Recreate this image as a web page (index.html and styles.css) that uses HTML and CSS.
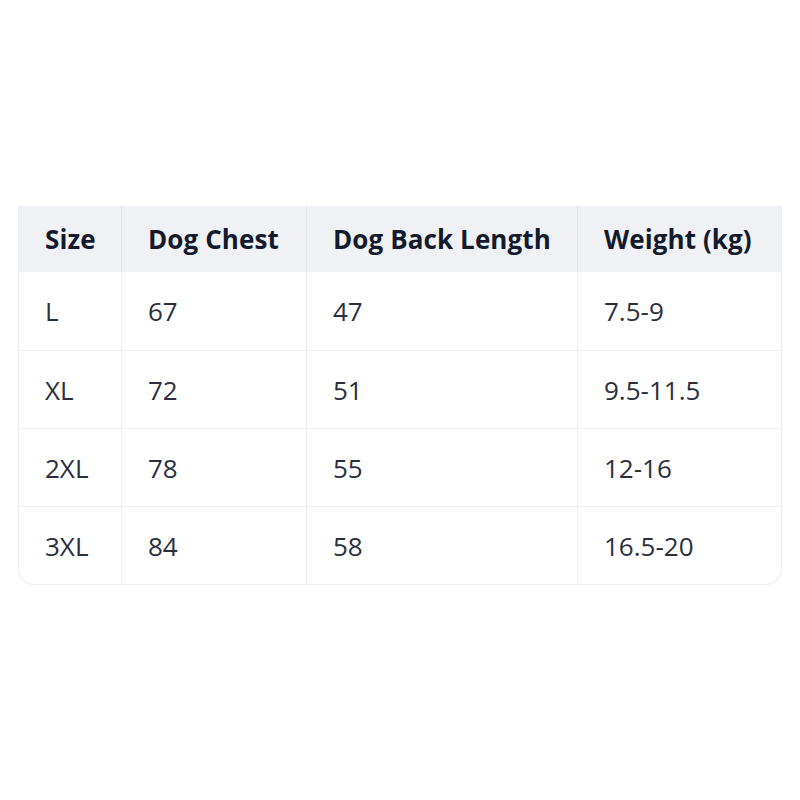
FILE: index.html
```html
<!DOCTYPE html>
<html>
<head>
<meta charset="utf-8">
<link rel="stylesheet" href="styles.css">
</head>
<body>
<div class="wrap">
  <table class="size-table">
    <colgroup>
      <col class="c1"><col class="c2"><col class="c3"><col class="c4">
    </colgroup>
    <thead>
      <tr><th>Size</th><th>Dog Chest</th><th>Dog Back Length</th><th>Weight (kg)</th></tr>
    </thead>
    <tbody>
      <tr><td>L</td><td>67</td><td>47</td><td>7.5-9</td></tr>
      <tr><td>XL</td><td>72</td><td>51</td><td>9.5-11.5</td></tr>
      <tr><td>2XL</td><td>78</td><td>55</td><td>12-16</td></tr>
      <tr><td>3XL</td><td>84</td><td>58</td><td>16.5-20</td></tr>
    </tbody>
  </table>
</div>
</body>
</html>
```
FILE: styles.css
```css
html, body {
  margin: 0;
  padding: 0;
  background: #ffffff;
}
.wrap {
  padding: 206px 18px 0 18px;
}
.size-table {
  width: 764px;
  border-collapse: separate;
  border-spacing: 0;
  table-layout: fixed;
  font-family: "Open Sans", "Noto Sans", sans-serif;
  border: 1px solid #eceef1;
  border-top: none;
  border-radius: 0 0 16px 16px;
  overflow: hidden;
}
.c1 { width: 102px; }
.c2 { width: 185px; }
.c3 { width: 271px; }
.c4 { width: 204px; }
.size-table th {
  background: #eff1f4;
  color: #141a2e;
  font-weight: 700;
  font-size: 26px;
  letter-spacing: 0.1px;
  text-align: left;
  height: 66px;
  padding: 0 0 0 26px;
  box-sizing: border-box;
  border-left: 1px solid #e2e5ea;
}
.size-table td {
  color: #2b2f3d;
  font-size: 26px;
  height: 78px;
  padding: 0 0 0 26px;
  box-sizing: border-box;
  border-left: 1px solid #eceef1;
  border-top: 1px solid #eff0f2;
}
.size-table th:first-child,
.size-table td:first-child {
  border-left: none;
}
.size-table tbody tr:first-child td {
  border-top: none;
}
```
